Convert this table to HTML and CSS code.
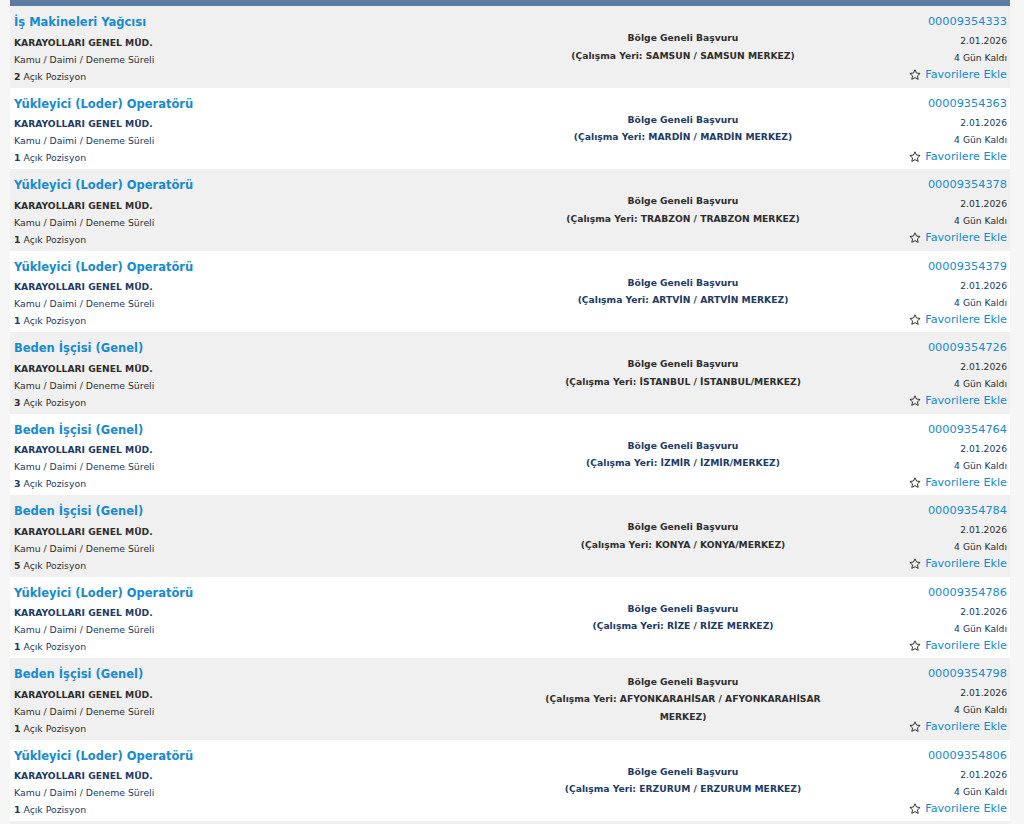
FILE: index.html
```html
<!DOCTYPE html>
<html lang="tr">
<head>
<meta charset="utf-8">
<title>İlanlar</title>
<link rel="stylesheet" href="styles.css">
</head>
<body>
<div class="list">
  <div class="topbar"></div>

  <div class="row odd">
    <div class="c-left"><a class="title">İş Makineleri Yağcısı</a><div class="line b">KARAYOLLARI GENEL MÜD.</div><div class="line">Kamu / Daimi / Deneme Süreli</div><div class="line"><b>2</b> Açık Pozisyon</div></div>
    <div class="c-mid"><div>Bölge Geneli Başvuru</div><div>(Çalışma Yeri: SAMSUN / SAMSUN MERKEZ)</div></div>
    <div class="c-right"><a class="id">00009354333</a><div class="date">2.01.2026</div><div class="left">4 Gün Kaldı</div><a class="fav"><svg viewBox="0 0 12 12"><path d="M6 0.8 7.55 4.05 11.1 4.45 8.45 6.85 9.2 10.4 6 8.6 2.8 10.4 3.55 6.85 0.9 4.45 4.45 4.05Z"/></svg>Favorilere Ekle</a></div>
  </div>

  <div class="row even">
    <div class="c-left"><a class="title">Yükleyici (Loder) Operatörü</a><div class="line b">KARAYOLLARI GENEL MÜD.</div><div class="line">Kamu / Daimi / Deneme Süreli</div><div class="line"><b>1</b> Açık Pozisyon</div></div>
    <div class="c-mid"><div>Bölge Geneli Başvuru</div><div>(Çalışma Yeri: MARDİN / MARDİN MERKEZ)</div></div>
    <div class="c-right"><a class="id">00009354363</a><div class="date">2.01.2026</div><div class="left">4 Gün Kaldı</div><a class="fav"><svg viewBox="0 0 12 12"><path d="M6 0.8 7.55 4.05 11.1 4.45 8.45 6.85 9.2 10.4 6 8.6 2.8 10.4 3.55 6.85 0.9 4.45 4.45 4.05Z"/></svg>Favorilere Ekle</a></div>
  </div>

  <div class="row odd">
    <div class="c-left"><a class="title">Yükleyici (Loder) Operatörü</a><div class="line b">KARAYOLLARI GENEL MÜD.</div><div class="line">Kamu / Daimi / Deneme Süreli</div><div class="line"><b>1</b> Açık Pozisyon</div></div>
    <div class="c-mid"><div>Bölge Geneli Başvuru</div><div>(Çalışma Yeri: TRABZON / TRABZON MERKEZ)</div></div>
    <div class="c-right"><a class="id">00009354378</a><div class="date">2.01.2026</div><div class="left">4 Gün Kaldı</div><a class="fav"><svg viewBox="0 0 12 12"><path d="M6 0.8 7.55 4.05 11.1 4.45 8.45 6.85 9.2 10.4 6 8.6 2.8 10.4 3.55 6.85 0.9 4.45 4.45 4.05Z"/></svg>Favorilere Ekle</a></div>
  </div>

  <div class="row even">
    <div class="c-left"><a class="title">Yükleyici (Loder) Operatörü</a><div class="line b">KARAYOLLARI GENEL MÜD.</div><div class="line">Kamu / Daimi / Deneme Süreli</div><div class="line"><b>1</b> Açık Pozisyon</div></div>
    <div class="c-mid"><div>Bölge Geneli Başvuru</div><div>(Çalışma Yeri: ARTVİN / ARTVİN MERKEZ)</div></div>
    <div class="c-right"><a class="id">00009354379</a><div class="date">2.01.2026</div><div class="left">4 Gün Kaldı</div><a class="fav"><svg viewBox="0 0 12 12"><path d="M6 0.8 7.55 4.05 11.1 4.45 8.45 6.85 9.2 10.4 6 8.6 2.8 10.4 3.55 6.85 0.9 4.45 4.45 4.05Z"/></svg>Favorilere Ekle</a></div>
  </div>

  <div class="row odd">
    <div class="c-left"><a class="title">Beden İşçisi (Genel)</a><div class="line b">KARAYOLLARI GENEL MÜD.</div><div class="line">Kamu / Daimi / Deneme Süreli</div><div class="line"><b>3</b> Açık Pozisyon</div></div>
    <div class="c-mid"><div>Bölge Geneli Başvuru</div><div>(Çalışma Yeri: İSTANBUL / İSTANBUL/MERKEZ)</div></div>
    <div class="c-right"><a class="id">00009354726</a><div class="date">2.01.2026</div><div class="left">4 Gün Kaldı</div><a class="fav"><svg viewBox="0 0 12 12"><path d="M6 0.8 7.55 4.05 11.1 4.45 8.45 6.85 9.2 10.4 6 8.6 2.8 10.4 3.55 6.85 0.9 4.45 4.45 4.05Z"/></svg>Favorilere Ekle</a></div>
  </div>

  <div class="row even">
    <div class="c-left"><a class="title">Beden İşçisi (Genel)</a><div class="line b">KARAYOLLARI GENEL MÜD.</div><div class="line">Kamu / Daimi / Deneme Süreli</div><div class="line"><b>3</b> Açık Pozisyon</div></div>
    <div class="c-mid"><div>Bölge Geneli Başvuru</div><div>(Çalışma Yeri: İZMİR / İZMİR/MERKEZ)</div></div>
    <div class="c-right"><a class="id">00009354764</a><div class="date">2.01.2026</div><div class="left">4 Gün Kaldı</div><a class="fav"><svg viewBox="0 0 12 12"><path d="M6 0.8 7.55 4.05 11.1 4.45 8.45 6.85 9.2 10.4 6 8.6 2.8 10.4 3.55 6.85 0.9 4.45 4.45 4.05Z"/></svg>Favorilere Ekle</a></div>
  </div>

  <div class="row odd">
    <div class="c-left"><a class="title">Beden İşçisi (Genel)</a><div class="line b">KARAYOLLARI GENEL MÜD.</div><div class="line">Kamu / Daimi / Deneme Süreli</div><div class="line"><b>5</b> Açık Pozisyon</div></div>
    <div class="c-mid"><div>Bölge Geneli Başvuru</div><div>(Çalışma Yeri: KONYA / KONYA/MERKEZ)</div></div>
    <div class="c-right"><a class="id">00009354784</a><div class="date">2.01.2026</div><div class="left">4 Gün Kaldı</div><a class="fav"><svg viewBox="0 0 12 12"><path d="M6 0.8 7.55 4.05 11.1 4.45 8.45 6.85 9.2 10.4 6 8.6 2.8 10.4 3.55 6.85 0.9 4.45 4.45 4.05Z"/></svg>Favorilere Ekle</a></div>
  </div>

  <div class="row even">
    <div class="c-left"><a class="title">Yükleyici (Loder) Operatörü</a><div class="line b">KARAYOLLARI GENEL MÜD.</div><div class="line">Kamu / Daimi / Deneme Süreli</div><div class="line"><b>1</b> Açık Pozisyon</div></div>
    <div class="c-mid"><div>Bölge Geneli Başvuru</div><div>(Çalışma Yeri: RİZE / RİZE MERKEZ)</div></div>
    <div class="c-right"><a class="id">00009354786</a><div class="date">2.01.2026</div><div class="left">4 Gün Kaldı</div><a class="fav"><svg viewBox="0 0 12 12"><path d="M6 0.8 7.55 4.05 11.1 4.45 8.45 6.85 9.2 10.4 6 8.6 2.8 10.4 3.55 6.85 0.9 4.45 4.45 4.05Z"/></svg>Favorilere Ekle</a></div>
  </div>

  <div class="row odd">
    <div class="c-left"><a class="title">Beden İşçisi (Genel)</a><div class="line b">KARAYOLLARI GENEL MÜD.</div><div class="line">Kamu / Daimi / Deneme Süreli</div><div class="line"><b>1</b> Açık Pozisyon</div></div>
    <div class="c-mid"><div>Bölge Geneli Başvuru</div><div>(Çalışma Yeri: AFYONKARAHİSAR / AFYONKARAHİSAR MERKEZ)</div></div>
    <div class="c-right"><a class="id">00009354798</a><div class="date">2.01.2026</div><div class="left">4 Gün Kaldı</div><a class="fav"><svg viewBox="0 0 12 12"><path d="M6 0.8 7.55 4.05 11.1 4.45 8.45 6.85 9.2 10.4 6 8.6 2.8 10.4 3.55 6.85 0.9 4.45 4.45 4.05Z"/></svg>Favorilere Ekle</a></div>
  </div>

  <div class="row even">
    <div class="c-left"><a class="title">Yükleyici (Loder) Operatörü</a><div class="line b">KARAYOLLARI GENEL MÜD.</div><div class="line">Kamu / Daimi / Deneme Süreli</div><div class="line"><b>1</b> Açık Pozisyon</div></div>
    <div class="c-mid"><div>Bölge Geneli Başvuru</div><div>(Çalışma Yeri: ERZURUM / ERZURUM MERKEZ)</div></div>
    <div class="c-right"><a class="id">00009354806</a><div class="date">2.01.2026</div><div class="left">4 Gün Kaldı</div><a class="fav"><svg viewBox="0 0 12 12"><path d="M6 0.8 7.55 4.05 11.1 4.45 8.45 6.85 9.2 10.4 6 8.6 2.8 10.4 3.55 6.85 0.9 4.45 4.45 4.05Z"/></svg>Favorilere Ekle</a></div>
  </div>
  <div class="tail"></div>
</div>
</body>
</html>
```

FILE: styles.css
```css
html, body {
  margin: 0;
  padding: 0;
}
body {
  background: #f6f6f6;
  font-family: "DejaVu Sans", Verdana, sans-serif;
  color: #333333;
}
.list {
  margin: 0 10px;
  width: 1000px;
}
.topbar {
  height: 6px;
  background: #5d7ca2;
}
.tail {
  height: 6px;
  background: #f0f0f0;
}
.row {
  display: grid;
  grid-template-columns: 523px 300px 177px;
  height: 81.5px;
  box-sizing: border-box;
}
.row.odd {
  background: #f0f0f0;
  color: #2e2e2e;
}
.row.even {
  background: #ffffff;
  color: #213a66;
}
.c-left {
  padding: 5px 0 0 4px;
}
.title {
  display: block;
  font-size: 11.5px;
  font-weight: bold;
  line-height: 22px;
  color: #168ad2;
  margin-bottom: 0.5px;
  white-space: nowrap;
}
.line {
  font-size: 9.3px;
  line-height: 17px;
  white-space: nowrap;
}
.line.b {
  font-weight: bold;
  font-size: 9.2px;
}
.c-mid {
  display: flex;
  flex-direction: column;
  justify-content: center;
  text-align: center;
  font-size: 9.2px;
  font-weight: bold;
  line-height: 17.5px;
  padding: 0 6px;
}
.c-right {
  padding: 5px 3px 0 0;
  text-align: right;
  display: flex;
  flex-direction: column;
  align-items: flex-end;
}
.id {
  display: block;
  font-size: 11.3px;
  line-height: 22px;
  color: #168ad2;
}
.date {
  font-size: 9.2px;
  line-height: 17px;
  margin-top: -1px;
}
.left {
  font-size: 9.2px;
  line-height: 17px;
}
.fav {
  display: flex;
  align-items: center;
  gap: 4px;
  font-size: 11.2px;
  line-height: 18px;
  color: #168ad2;
}
.fav svg {
  width: 12px;
  height: 12px;
  fill: none;
  stroke: #333333;
  stroke-width: 1;
  stroke-linejoin: round;
}
```
